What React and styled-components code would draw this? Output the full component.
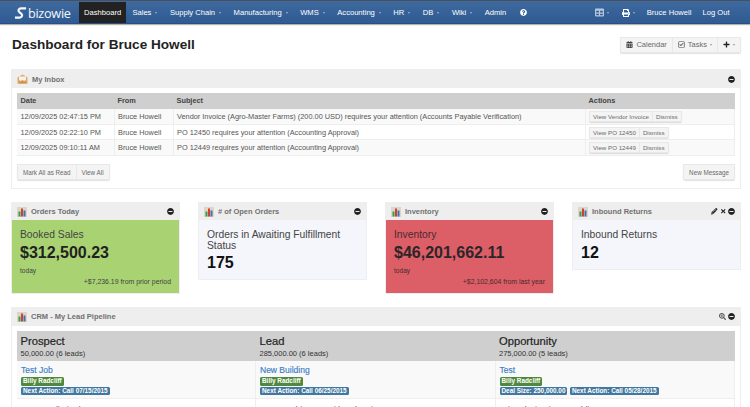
import React from 'react';
import styled, { createGlobalStyle } from 'styled-components';
import {
  FaCalendarAlt,
  FaRegCheckSquare,
  FaPlus,
  FaMinusCircle,
  FaPencilAlt,
  FaTimes,
  FaSearchPlus,
  FaPrint,
  FaTable,
  FaQuestionCircle,
} from 'react-icons/fa';

const GlobalStyle = createGlobalStyle`
  html, body {
    margin: 0;
    height: 407px;
    overflow: hidden;
    background: #fff;
    font-family: "Liberation Sans", Arial, sans-serif;
  }
  * { box-sizing: border-box; }
`;

const Navbar = styled.div`
  display: flex;
  align-items: stretch;
  height: 24px;
  padding: 1px 15px 0 14px;
  background: linear-gradient(#3f6a9f, #2f5a92);
  border-top: 1px solid #4a4f58;
  border-bottom: 1px solid #2a4f80;
  box-shadow: 0 1px 1px rgba(0, 0, 0, 0.3);
  color: #fff;
  font-size: 7.6px;
`;

const Logo = styled.div`
  display: flex;
  align-items: center;
  width: 65px;
  gap: 1px;
  font-family: "Open Sans", sans-serif;
  font-size: 12.7px;
  letter-spacing: -0.3px;
  color: #f4f7fb;
`;

const NavItem = styled.div`
  display: flex;
  align-items: center;
  gap: ${(p) => p.$gap || 4}px;
  padding: 0 ${(p) => p.$pad || 6.25}px;
  background: ${(p) => (p.$active ? '#222' : 'transparent')};
  white-space: nowrap;
`;

const Caret = styled.span`
  width: 0;
  height: 0;
  border-left: 1.5px solid transparent;
  border-right: 1.5px solid transparent;
  border-top: 2px solid ${(p) => p.$color || '#9db4d1'};
`;

const Spacer = styled.div`
  flex: 1;
`;

const Main = styled.div`
  padding: 0 9px 0 11px;
`;

const TitleRow = styled.div`
  display: flex;
  align-items: center;
  justify-content: space-between;
  height: 45px;
  padding: 0 0 4px 1px;
`;

const Title = styled.h1`
  margin: 0;
  font-size: 13.6px;
  font-weight: 700;
  color: #222;
`;

const ButtonGroup = styled.div`
  display: inline-flex;
  border-radius: 2px;
  box-shadow: 0 1px 1px rgba(0, 0, 0, 0.12);
`;

const Button = styled.div`
  display: flex;
  align-items: center;
  gap: ${(p) => p.$gap || 3}px;
  height: ${(p) => p.$height || 16}px;
  padding: 0 ${(p) => p.$pad || 5}px;
  background: #f4f4f4;
  border: 1px solid #e8e8e8;
  border-left-width: ${(p) => (p.$joined ? 0 : 1)}px;
  font-size: ${(p) => p.$size || 7}px;
  color: ${(p) => p.$color || '#6a6a6a'};
  white-space: nowrap;
`;

const Panel = styled.div`
  border: 1px solid #eeeeee;
  background: ${(p) => p.$bg || '#fff'};
`;

const PanelHead = styled.div`
  display: flex;
  align-items: center;
  gap: 4px;
  height: ${(p) => p.$height || 18}px;
  padding: 0 5px;
  background: #eeeeee;
  font-size: 7.5px;
  font-weight: 700;
  color: #707070;
`;

const PanelTools = styled.div`
  display: flex;
  align-items: center;
  gap: 2px;
  margin-left: auto;
  color: #222;
  font-size: 7px;
`;

const PanelBody = styled.div`
  padding: 5px 5px 8px;
`;

const Table = styled.table`
  width: 100%;
  border-collapse: collapse;
  table-layout: fixed;
  font-size: 7.35px;
  color: #555;
`;

const HeadCell = styled.th`
  height: 15.5px;
  padding: 0 3.5px;
  background: #cfcfcf;
  text-align: left;
  font-weight: 700;
  color: #444;
`;

const Cell = styled.td`
  height: 15.7px;
  padding: 0 3.5px;
  background: ${(p) => (p.$odd ? '#f9f9f9' : '#fff')};
  border-right: 1px solid #eee;
  border-bottom: 1px solid #eee;
  white-space: nowrap;
`;

const Toolbar = styled.div`
  display: flex;
  justify-content: space-between;
  margin-top: 8px;
`;

const CardGrid = styled.div`
  display: grid;
  grid-template-columns: repeat(4, 1fr);
  gap: 18px;
  align-items: start;
  margin: 13px 0;
`;

const CardBody = styled.div`
  padding: 10px 8px 7px 8px;
  color: ${(p) => p.$color || '#444'};
`;

const CardLabel = styled.div`
  font-size: 10.3px;
  line-height: 10.7px;
`;

const CardValue = styled.div`
  margin-top: 2px;
  font-size: 16px;
  line-height: 19px;
  font-weight: 700;
  color: ${(p) => p.$color || '#111'};
`;

const CardNote = styled.div`
  margin-top: 5px;
  font-size: 6.6px;
  line-height: 8px;
`;

const CardDelta = styled.div`
  margin-top: 3px;
  text-align: right;
  font-size: 6.9px;
  line-height: 8px;
`;

const Pipeline = styled.div`
  display: grid;
  grid-template-columns: 239px 239.5px 1fr;
`;

const StageHead = styled.div`
  height: 30.5px;
  padding: 4px 3.5px 0;
  background: #cfcfcf;
  color: #333;
  font-size: 7.5px;
  line-height: 10px;
`;

const StageName = styled.div`
  font-size: 11.2px;
  line-height: 13px;
  margin-bottom: 1px;
  color: #222;
  -webkit-text-stroke: 0.2px #222;
`;

const Lead = styled.div`
  height: 38px;
  padding: ${(p) => (p.$odd ? 4 : 5.5)}px 3.5px 0 4px;
  background: ${(p) => (p.$odd ? '#f9f9f9' : '#fff')};
  border-right: 1px solid #eee;
  border-bottom: 1px solid #eee;
`;

const LeadName = styled.div`
  margin-bottom: 2px;
  font-size: 8.5px;
  line-height: 10px;
  color: #3a7dc4;
  -webkit-text-stroke: 0.15px #3a7dc4;
`;

const LabelRow = styled.div`
  display: flex;
  gap: 2.5px;
  margin-top: 1px;
`;

const Label = styled.span`
  display: inline-block;
  height: 8.5px;
  padding: 0 2px;
  border-radius: 1.5px;
  background: ${(p) => (p.$green ? '#4f8a3c' : '#41789f')};
  color: #fff;
  font-size: 6.4px;
  line-height: 8.5px;
  font-weight: 700;
  white-space: nowrap;
`;

// little bar chart used as the widget icon
function ChartIcon() {
  return (
    <svg width="10" height="10" viewBox="0 0 10 10">
      <rect width="10" height="10" fill="#ddd6c8" />
      <rect x="1.5" y="4.5" width="2" height="5" fill="#3f9b4c" />
      <rect x="4" y="1.5" width="2" height="8" fill="#cf4030" />
      <rect x="6.5" y="3.5" width="2" height="6" fill="#3f6fb5" />
    </svg>
  );
}

function InboxIcon() {
  return (
    <svg width="11" height="10" viewBox="0 0 11 10">
      <path d="M0.5 3.5 L5.5 0.5 L10.5 3.5 V9.5 H0.5 Z" fill="#e0a868" />
      <path d="M2 2.5 H9 V6 L5.5 7.5 L2 6 Z" fill="#f6f3ee" />
      <path d="M0.5 9.5 L5.5 6 L10.5 9.5 Z" fill="#cf9350" />
    </svg>
  );
}

function LogoMark() {
  return (
    <svg width="13" height="12" viewBox="0 0 14 13" fill="none">
      <path
        d="M13 1.5 H7.5 C5 1.5 4 4 5.5 5.3 L8 7.4 C9.6 8.8 8.6 11.5 6.2 11.5 H1"
        stroke="#f4f7fb"
        strokeWidth="2.3"
      />
    </svg>
  );
}

const navItems = ['Sales', 'Supply Chain', 'Manufacturing', 'WMS', 'Accounting', 'HR', 'DB', 'Wiki'];

const messages = [
  ['12/09/2025 02:47:15 PM', 'Vendor Invoice (Agro-Master Farms) (200.00 USD) requires your attention (Accounts Payable Verification)', 'View Vendor Invoice'],
  ['12/09/2025 02:22:10 PM', 'PO 12450 requires your attention (Accounting Approval)', 'View PO 12450'],
  ['12/09/2025 09:10:11 AM', 'PO 12449 requires your attention (Accounting Approval)', 'View PO 12449'],
];

const stages = [
  {
    name: 'Prospect',
    total: '50,000.00 (6 leads)',
    lead: 'Test Job',
    labels: ['Next Action: Call 07/15/2015'],
    next: 'Steve Unlimited Inc',
  },
  {
    name: 'Lead',
    total: '285,000.00 (6 leads)',
    lead: 'New Building',
    labels: ['Next Action: Call 06/25/2015'],
    next: 'New Machinery Smith Industries',
  },
  {
    name: 'Opportunity',
    total: '275,000.00 (5 leads)',
    lead: 'Test',
    labels: ['Deal Size: 250,000.00', 'Next Action: Call 05/28/2015'],
    next: 'Printed Circuit Assemblies',
  },
];

function App() {
  return (
    <>
      <GlobalStyle />
      <Navbar>
        <Logo>
          <LogoMark />
          bizowie
        </Logo>
        <NavItem $active $pad={5}>Dashboard</NavItem>
        {navItems.map((item) => (
          <NavItem key={item}>
            {item}
            <Caret />
          </NavItem>
        ))}
        <NavItem>Admin</NavItem>
        <NavItem $pad={7}><FaQuestionCircle size={7} /></NavItem>
        <Spacer />
        <NavItem $gap={3}><FaTable size={9} color="#b8c8de" /><Caret /></NavItem>
        <NavItem $gap={3}><FaPrint size={8} /><Caret /></NavItem>
        <NavItem $pad={5.5}>Bruce Howell</NavItem>
        <NavItem $pad={5.5}>Log Out</NavItem>
      </Navbar>
      <Main>
        <TitleRow>
          <Title>Dashboard for Bruce Howell</Title>
          <ButtonGroup>
            <Button $size={7.5}><FaCalendarAlt size={7} color="#444" />Calendar</Button>
            <Button $joined $size={7.5}><FaRegCheckSquare size={7} color="#444" />Tasks<Caret $color="#999" /></Button>
            <Button $joined><FaPlus size={7} color="#222" /><Caret $color="#999" /></Button>
          </ButtonGroup>
        </TitleRow>

        <Panel>
          <PanelHead>
            <InboxIcon />
            My Inbox
            <PanelTools><FaMinusCircle size={7} /></PanelTools>
          </PanelHead>
          <PanelBody>
            <Table>
              <colgroup>
                <col width="97" />
                <col width="59" />
                <col width="412" />
                <col />
              </colgroup>
              <thead>
                <tr>
                  <HeadCell>Date</HeadCell>
                  <HeadCell>From</HeadCell>
                  <HeadCell>Subject</HeadCell>
                  <HeadCell>Actions</HeadCell>
                </tr>
              </thead>
              <tbody>
                {messages.map(([date, subject, action], i) => (
                  <tr key={date}>
                    <Cell $odd={i % 2 === 0}>{date}</Cell>
                    <Cell $odd={i % 2 === 0}>Bruce Howell</Cell>
                    <Cell $odd={i % 2 === 0}>{subject}</Cell>
                    <Cell $odd={i % 2 === 0}>
                      <ButtonGroup>
                        <Button $height={11} $pad={3} $size={6.2}>{action}</Button>
                        <Button $joined $height={11} $pad={3} $size={6.2}>Dismiss</Button>
                      </ButtonGroup>
                    </Cell>
                  </tr>
                ))}
              </tbody>
            </Table>
            <Toolbar>
              <ButtonGroup>
                <Button $size={6.3}>Mark All as Read</Button>
                <Button $joined $size={6.3}>View All</Button>
              </ButtonGroup>
              <ButtonGroup>
                <Button $size={6.3}>New Message</Button>
              </ButtonGroup>
            </Toolbar>
          </PanelBody>
        </Panel>

        <CardGrid>
          <Panel $bg="#a9d273">
            <PanelHead $height={17}>
              <ChartIcon />
              Orders Today
              <PanelTools><FaMinusCircle size={7} /></PanelTools>
            </PanelHead>
            <CardBody>
              <CardLabel>Booked Sales</CardLabel>
              <CardValue $color="#222">$312,500.23</CardValue>
              <CardNote>today</CardNote>
              <CardDelta>+$7,236.19 from prior period</CardDelta>
            </CardBody>
          </Panel>
          <Panel $bg="#f5f6fb">
            <PanelHead $height={17}>
              <ChartIcon />
              # of Open Orders
              <PanelTools><FaMinusCircle size={7} /></PanelTools>
            </PanelHead>
            <CardBody>
              <CardLabel>Orders in Awaiting Fulfillment Status</CardLabel>
              <CardValue>175</CardValue>
            </CardBody>
          </Panel>
          <Panel $bg="#dc5f68">
            <PanelHead $height={17}>
              <ChartIcon />
              Inventory
              <PanelTools><FaMinusCircle size={7} /></PanelTools>
            </PanelHead>
            <CardBody $color="#4a2a2c">
              <CardLabel>Inventory</CardLabel>
              <CardValue $color="#2c2528">$46,201,662.11</CardValue>
              <CardNote>today</CardNote>
              <CardDelta>+$2,102,604 from last year</CardDelta>
            </CardBody>
          </Panel>
          <Panel $bg="#f5f6fb">
            <PanelHead $height={17}>
              <ChartIcon />
              Inbound Returns
              <PanelTools>
                <FaPencilAlt size={6.5} />
                <FaTimes size={6.5} />
                <FaMinusCircle size={7} />
              </PanelTools>
            </PanelHead>
            <CardBody>
              <CardLabel>Inbound Returns</CardLabel>
              <CardValue>12</CardValue>
            </CardBody>
          </Panel>
        </CardGrid>

        <Panel>
          <PanelHead>
            <ChartIcon />
            CRM - My Lead Pipeline
            <PanelTools>
              <FaSearchPlus size={7} color="#555" />
              <FaMinusCircle size={7} />
            </PanelTools>
          </PanelHead>
          <PanelBody>
            <Pipeline>
              {stages.map((stage) => (
                <div key={stage.name}>
                  <StageHead>
                    <StageName>{stage.name}</StageName>
                    {stage.total}
                  </StageHead>
                  <Lead $odd>
                    <LeadName>{stage.lead}</LeadName>
                    <LabelRow><Label $green>Billy Radcliff</Label></LabelRow>
                    <LabelRow>
                      {stage.labels.map((label) => <Label key={label}>{label}</Label>)}
                    </LabelRow>
                  </Lead>
                  <Lead>
                    <LeadName>{stage.next}</LeadName>
                  </Lead>
                </div>
              ))}
            </Pipeline>
          </PanelBody>
        </Panel>
      </Main>
    </>
  );
}

export default App;
